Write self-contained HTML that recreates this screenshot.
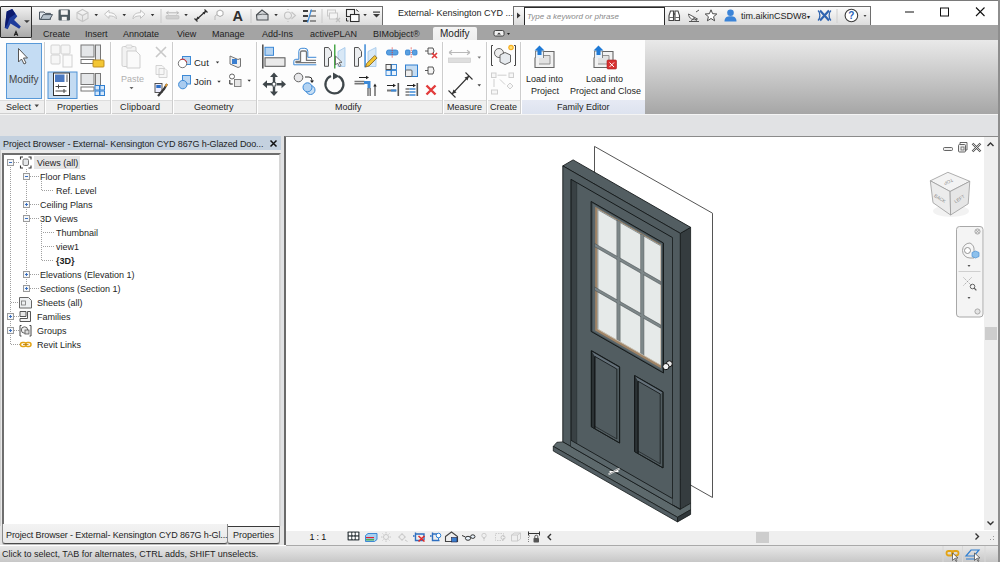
<!DOCTYPE html>
<html><head><meta charset="utf-8">
<style>
*{box-sizing:border-box;margin:0;padding:0}
html,body{width:1000px;height:562px;overflow:hidden;background:#fff;font-family:"Liberation Sans",sans-serif;font-size:9px;color:#1e1e1e}
.a{position:absolute}
.t{position:absolute;white-space:nowrap;line-height:13px;font-size:9px}
svg{position:absolute;overflow:visible}
#titlebar{left:0;top:0;width:1000px;height:24px;background:#fff;border-top:1px solid #7a7a7a}
#qat{left:31px;top:6px;width:352px;height:19px;background:linear-gradient(#fbfbfb,#dcdcdc);border:1px solid #6e6e6e;border-bottom:none;border-left:none}
#info{left:513px;top:6px;width:358px;height:19px;background:linear-gradient(#fbfbfb,#dcdcdc);border:1px solid #6e6e6e;border-bottom:none}
#search{left:524px;top:7px;width:141px;height:18px;background:#fff;border:1px solid #2a2a2a;border-bottom:none}
#rbtn{left:0;top:6px;width:32px;height:32px;background:linear-gradient(#f0f0f0,#a9a9a9);border:1px solid #2e2e2e;border-radius:1px}
#tabs{left:31px;top:25px;width:969px;height:15px;background:#a4a4a4}
#modtab{left:433px;top:27px;width:44px;height:13px;background:linear-gradient(#f4f4f4,#eeeeee);border-radius:2px 2px 0 0}
#ribbon{left:0;top:40px;width:645px;height:74px;background:#fdfdfd}
#ribgrad{left:645px;top:40px;width:355px;height:74px;background:linear-gradient(#e9e9e9,#a6a6a6)}
#lblband{left:0;top:100px;width:645px;height:14px;background:#efefef;border-top:1px solid #dddddd;border-bottom:1px solid #cfcfcf}
#febband{left:521px;top:100px;width:124px;height:14px;background:linear-gradient(#e6eaf4,#dde3ef)}
.sep{position:absolute;top:42px;width:2px;height:72px;border-left:1px solid #cdcdcd;border-right:1px solid #fff}
#strip{left:0;top:114px;width:1000px;height:22px;background:#e1e2e4;border-top:1px solid #f4f4f4}
#pbh{left:0;top:136px;width:281px;height:14px;background:#c4d1df}
#treewrap{left:0;top:150px;width:281px;height:376px;background:#ebebeb;border-left:1px solid #d0d0d0}
#tree{left:2px;top:153px;width:279px;height:373px;background:#fff;border-left:2px solid #6e6e6e;border-top:2px solid #6e6e6e;border-right:2px solid #d6d6d6}
#gap{left:281px;top:136px;width:3px;height:409px;background:#e1e2e4}
#pbtabs{left:0;top:526px;width:284px;height:19px;background:#e4e4e4}
#tab1{left:2px;top:524px;width:226px;height:19.5px;background:linear-gradient(#f3f3f3,#e8e8e8);border:1px solid #8a8a8a;border-top:none;border-bottom:1px solid #4a4a4a;border-radius:0 0 3px 3px;box-shadow:0 1px 0 #bdbdbd}
#tab2{left:227px;top:526px;width:53px;height:17.5px;background:linear-gradient(#efefef,#e6e6e6);border:1px solid #8a8a8a;border-top:1px solid #3a3a3a;border-bottom:1px solid #4a4a4a;border-radius:0 0 3px 3px;box-shadow:0 1px 0 #bdbdbd}
#canvas{left:284px;top:136px;width:716px;height:409px;background:#fff;border-left:2px solid #6a6a6a;border-top:1px solid #8a8a8a;border-right:2px solid #5a5a5a}
#vcb{left:286px;top:531px;width:712px;height:15px;background:#efefef;border-bottom:1px solid #aaaaaa}
#vscroll{left:984px;top:137px;width:14px;height:393px;background:#efefef}
#vthumb{left:985px;top:327px;width:12px;height:13px;background:#cdcdcd}
#hthumb{left:756px;top:532px;width:13px;height:11px;background:#cdcdcd}
#status{left:0;top:546px;width:1000px;height:16px;background:linear-gradient(#e8e8e8,#c7c7c7)}
</style></head><body>
<div id="titlebar" class="a"></div>
<div id="qat" class="a"></div>
<div id="info" class="a"></div>
<div id="search" class="a"></div>
<div id="tabs" class="a"></div>
<div id="rbtn" class="a"></div>
<div id="modtab" class="a"></div>
<div id="ribbon" class="a"></div>
<div id="ribgrad" class="a"></div>
<div id="lblband" class="a"></div>
<div id="febband" class="a"></div>
<div class="sep" style="left:44px"></div>
<div class="sep" style="left:110px"></div>
<div class="sep" style="left:172px"></div>
<div class="sep" style="left:256px"></div>
<div class="sep" style="left:442px"></div>
<div class="sep" style="left:486px"></div>
<div class="sep" style="left:520px"></div>
<div class="a" style="left:6px;top:43px;width:36px;height:56px;background:#c4dcf3;border:1px solid #5899d8"></div>
<div id="strip" class="a"></div>
<div id="pbh" class="a"></div>
<div id="treewrap" class="a"></div>
<div id="tree" class="a"></div>
<div class="a" style="left:34px;top:156px;width:46px;height:13px;background:#e5e5e5"></div>
<div id="gap" class="a"></div>
<div id="pbtabs" class="a"></div>
<div id="tab2" class="a"></div>
<div id="tab1" class="a"></div>
<div id="canvas" class="a"></div>
<div id="vscroll" class="a"></div>
<div id="vthumb" class="a"></div>
<div id="vcb" class="a"></div>
<div id="hthumb" class="a"></div>
<div id="status" class="a"></div>
<div class="a" style="left:998px;top:0;width:2px;height:562px;background:#8e8e8e"></div>

<!-- title texts -->
<div class="t" style="left:398px;top:7px">External- Kensington CYD ...</div>
<div class="t" style="left:527px;top:10px;color:#8a8a8a;font-style:italic;font-size:8px">Type a keyword or phrase</div>
<div class="t" style="left:741px;top:10px">tim.aikinCSDW8<span style="font-size:6px">&#9662;</span></div>

<!-- tabs -->
<div class="t" style="left:43px;top:28px">Create</div>
<div class="t" style="left:85px;top:28px">Insert</div>
<div class="t" style="left:123px;top:28px">Annotate</div>
<div class="t" style="left:177px;top:28px">View</div>
<div class="t" style="left:212px;top:28px">Manage</div>
<div class="t" style="left:262px;top:28px">Add-Ins</div>
<div class="t" style="left:310px;top:28px">activePLAN</div>
<div class="t" style="left:373px;top:28px">BIMobject&#174;</div>
<div class="t" style="left:440px;top:27px;font-size:10px">Modify</div>

<!-- panel labels -->
<div class="t" style="left:6px;top:101px">Select</div>
<div class="t" style="left:57px;top:101px">Properties</div>
<div class="t" style="left:120px;top:101px;letter-spacing:0.2px">Clipboard</div>
<div class="t" style="left:194px;top:101px">Geometry</div>
<div class="t" style="left:335px;top:101px">Modify</div>
<div class="t" style="left:447px;top:101px">Measure</div>
<div class="t" style="left:490px;top:101px">Create</div>
<div class="t" style="left:557px;top:101px">Family Editor</div>

<!-- ribbon texts -->
<div class="t" style="left:9px;top:73px;font-size:10px;color:#444">Modify</div>
<div class="t" style="left:121px;top:73px;color:#b0b0b0">Paste</div>
<div class="t" style="left:194px;top:56px;font-size:9.5px">Cut</div>
<div class="t" style="left:194px;top:75px;font-size:9.5px">Join</div>
<div class="t" style="left:526px;top:73px">Load into</div>
<div class="t" style="left:531px;top:85px">Project</div>
<div class="t" style="left:586px;top:73px">Load into</div>
<div class="t" style="left:570px;top:85px">Project and Close</div>

<!-- project browser -->
<div class="t" style="left:3px;top:138px;letter-spacing:-0.1px">Project Browser - External- Kensington CYD 867G h-Glazed Doo...</div>
<div class="t" style="left:37px;top:157px">Views (all)</div>
<div class="t" style="left:40px;top:171px">Floor Plans</div>
<div class="t" style="left:56px;top:185px">Ref. Level</div>
<div class="t" style="left:40px;top:199px">Ceiling Plans</div>
<div class="t" style="left:40px;top:213px">3D Views</div>
<div class="t" style="left:56px;top:227px">Thumbnail</div>
<div class="t" style="left:56px;top:241px">view1</div>
<div class="t" style="left:56px;top:255px;font-weight:bold">{3D}</div>
<div class="t" style="left:40px;top:269px">Elevations (Elevation 1)</div>
<div class="t" style="left:40px;top:283px">Sections (Section 1)</div>
<div class="t" style="left:37px;top:297px">Sheets (all)</div>
<div class="t" style="left:37px;top:311px">Families</div>
<div class="t" style="left:37px;top:325px">Groups</div>
<div class="t" style="left:37px;top:339px">Revit Links</div>

<div class="t" style="left:6px;top:529px;letter-spacing:-0.12px">Project Browser - External- Kensington CYD 867G h-Gl...</div>
<div class="t" style="left:233px;top:529px">Properties</div>
<div class="t" style="left:309.5px;top:531px;font-size:9px;letter-spacing:-0.2px;color:#111">1 : 1</div>
<div class="t" style="left:2px;top:548px">Click to select, TAB for alternates, CTRL adds, SHIFT unselects.</div>
<svg style="left:0;top:0" width="1000" height="562" viewBox="0 0 1000 562">
<polygon points="594.5,146.4 712.5,213.2 712.5,497.5 594.5,430.7" fill="#ffffff" stroke="#555555" stroke-width="1"/>
<polygon points="680.3,233.34 690.5999999999999,227.34 690.5999999999999,503.34 680.3,509.34" fill="#353c3f" stroke="#151a1b" stroke-width="0.8"/>
<polygon points="562.8,165.9 573.0999999999999,159.9 690.5999999999999,227.34 680.3,233.34" fill="#535e62" stroke="#151a1b" stroke-width="0.9"/>
<polygon points="562.8,165.9 680.3,233.34 680.3,509.34 562.8,441.9" fill="#505b5f" stroke="#151a1b" stroke-width="0.9"/>
<polygon points="571,179.31 576.7,182.58 576.7,449.88 571,446.61" fill="#394144"/>
<polygon points="576.7,182.58 672.5,237.57 672.5,498.57 576.7,443.58" fill="#525d61"/>
<line x1="571" y1="179.31" x2="672.5" y2="237.57" stroke="#151a1b" stroke-width="1"/>
<line x1="571" y1="179.31" x2="571" y2="446.61" stroke="#151a1b" stroke-width="1.1"/>
<line x1="672.5" y1="237.57" x2="672.5" y2="504.87" stroke="#151a1b" stroke-width="0.8"/>
<line x1="576.7" y1="182.58" x2="576.7" y2="443.58" stroke="#2a3133" stroke-width="0.8"/>
<polygon points="591.1,201.44 663.5,243.0 663.5,373.0 591.1,331.44" fill="#3d4649" stroke="#151a1b" stroke-width="1"/>
<polygon points="592.6,203.51 662.0,243.34 662.0,370.94 592.6,331.11" fill="#59656a"/>
<polygon points="595.2,206.8 661.0,244.57 661.0,368.17 595.2,330.4" fill="#a08466"/>
<polygon points="597.6,209.28 660.6,245.44 660.6,364.94 597.6,328.78" fill="#e6eae9"/>
<line x1="597.9" y1="209.45" x2="597.9" y2="328.95" stroke="#8a9496" stroke-width="1"/>
<line x1="597.6" y1="209.58" x2="660.6" y2="245.74" stroke="#8a9496" stroke-width="1"/>
<polygon points="616.9,220.35 620.1,222.19 620.1,341.69 616.9,339.85" fill="#7d8789" stroke="#3e4547" stroke-width="0.5"/>
<polygon points="640.7,234.01 643.9,235.85 643.9,355.35 640.7,353.51" fill="#7d8789" stroke="#3e4547" stroke-width="0.5"/>
<polygon points="594.6,243.45 660.6,281.34 660.6,284.54 594.6,246.65" fill="#7d8789" stroke="#3e4547" stroke-width="0.5"/>
<polygon points="594.6,286.95 660.6,324.84 660.6,328.04 594.6,290.15" fill="#7d8789" stroke="#3e4547" stroke-width="0.5"/>
<polygon points="617.4,220.64 619.6,221.9 619.6,341.4 617.4,340.14" fill="#7d8789"/>
<polygon points="641.2,234.3 643.4,235.56 643.4,355.06 641.2,353.8" fill="#7d8789"/>
<polygon points="597.6,328.48 660.6,364.64 660.6,365.54 597.6,329.38" fill="#c9c3b5"/>
<polygon points="591.4,350.82 619.6,367.0 619.6,443.0 591.4,426.82" fill="#505b5f" stroke="#151a1b" stroke-width="1"/>
<polygon points="591.4,350.82 594.9,353.63 594.9,428.83 591.4,426.82" fill="#2b3234"/>
<polygon points="591.4,350.82 619.6,367.0 616.8,369.0 594.9,356.43" fill="#65717a"/>
<line x1="591.4" y1="350.82" x2="619.6" y2="367.0" stroke="#151a1b" stroke-width="1.1"/>
<line x1="594.9" y1="356.43" x2="616.8" y2="369.0" stroke="#151a1b" stroke-width="0.9"/>
<line x1="594.9" y1="356.43" x2="594.9" y2="428.83" stroke="#0c0f10" stroke-width="1.1"/>
<line x1="591.4" y1="350.82" x2="591.4" y2="426.82" stroke="#151a1b" stroke-width="1.1"/>
<line x1="616.8" y1="369.0" x2="616.8" y2="438.9" stroke="#151a1b" stroke-width="0.8"/>
<line x1="619.6" y1="367.0" x2="619.6" y2="443.0" stroke="#151a1b" stroke-width="0.8"/>
<line x1="591.4" y1="426.82" x2="619.6" y2="443.0" stroke="#151a1b" stroke-width="0.8"/>
<line x1="594.9" y1="426.33" x2="616.8" y2="438.9" stroke="#151a1b" stroke-width="0.6"/>
<polygon points="634.6,375.61 663.0,391.91 663.0,467.91 634.6,451.61" fill="#505b5f" stroke="#151a1b" stroke-width="1"/>
<polygon points="634.6,375.61 638.1,378.42 638.1,453.62 634.6,451.61" fill="#2b3234"/>
<polygon points="634.6,375.61 663.0,391.91 660.2,393.91 638.1,381.22" fill="#65717a"/>
<line x1="634.6" y1="375.61" x2="663.0" y2="391.91" stroke="#151a1b" stroke-width="1.1"/>
<line x1="638.1" y1="381.22" x2="660.2" y2="393.91" stroke="#151a1b" stroke-width="0.9"/>
<line x1="638.1" y1="381.22" x2="638.1" y2="453.62" stroke="#0c0f10" stroke-width="1.1"/>
<line x1="634.6" y1="375.61" x2="634.6" y2="451.61" stroke="#151a1b" stroke-width="1.1"/>
<line x1="660.2" y1="393.91" x2="660.2" y2="463.81" stroke="#151a1b" stroke-width="0.8"/>
<line x1="663.0" y1="391.91" x2="663.0" y2="467.91" stroke="#151a1b" stroke-width="0.8"/>
<line x1="634.6" y1="451.61" x2="663.0" y2="467.91" stroke="#151a1b" stroke-width="0.8"/>
<line x1="638.1" y1="451.12" x2="660.2" y2="463.81" stroke="#151a1b" stroke-width="0.6"/>
<polygon points="553.3,446.4 677.5,517.3181999999999 690.6,509.8 690.6,503.3 680.3,509.34 562.8,441.9 556.9,442.3" fill="#5d696c" stroke="#151a1b" stroke-width="0.8"/>
<polygon points="553.3,446.4 677.5,517.3181999999999 677.5,521.9182 553.3,451.0" fill="#535e63" stroke="#151a1b" stroke-width="0.8"/>
<polygon points="677.5,517.3181999999999 690.6,509.8 690.6,514.4 677.5,521.9182" fill="#30373a" stroke="#151a1b" stroke-width="0.8"/>
<polygon points="571,440.31 672.5,498.57 672.5,504.97 571,446.71" fill="#5a666a"/>
<line x1="571" y1="440.31" x2="672.5" y2="498.57" stroke="#151a1b" stroke-width="0.9"/>
<line x1="571" y1="446.71" x2="680.3" y2="509.44" stroke="#151a1b" stroke-width="0.9"/>
<circle cx="669.3" cy="363.8" r="3.0" fill="#e8e8e8" stroke="#111" stroke-width="1"/>
<circle cx="665.9" cy="366.6" r="3.1" fill="#f4f4f4" stroke="#111" stroke-width="1"/>
<path d="M608.5,474.5 L619.5,468.5 M609.5,471.8 L618.5,471.3" stroke="#fff" stroke-width="1.6"/>
<path d="M608.5,474.5 L619.5,468.5" stroke="#222" stroke-width="0.5"/>

<!-- R button -->
<polygon points="6.7,11.4 12.2,9.1 17.3,16.2 14.1,20 20.8,26.4 19.2,28.7 10.5,23.5 7.7,29.3 4.8,28" fill="#1f3c9c"/>
<polygon points="6.7,11.4 12.2,9.1 15.5,14 9.5,18 7.5,24 4.8,28" fill="#0c1a6e"/>
<polygon points="24,20.3 29.8,20.3 26.9,23" fill="#3a3a3a"/>
<path d="M14.2,35.8 L16,31.5 L17.8,35.8 M15,34.4 h2" stroke="#222" stroke-width="1.1" fill="none"/>
<!-- QAT -->
<path d="M39.5,12 h4.5 l1.2,1.4 h5.3 v6 h-11z" fill="#dfe4ea" stroke="#4a5560" stroke-width="1"/>
<path d="M40.5,19.4 l2.8,-4.8 h9.2 l-2.8,4.8z" fill="#b7c2cc" stroke="#4a5560" stroke-width="1"/>
<rect x="58.5" y="9.5" width="11.5" height="11" rx="1.2" fill="#4d5960"/>
<rect x="60.8" y="10.2" width="7" height="4.6" fill="#f2f2f2"/>
<rect x="61.8" y="16.8" width="5" height="3.7" fill="#f2f2f2"/>
<path d="M82.5,9.5 l5.5,3 v6 l-5.5,3 l-5.5,-3 v-6z M77,12.5 l5.5,3 l5.5,-3 M82.5,15.5 v6" fill="none" stroke="#c6c6c6" stroke-width="1.1"/>
<g fill="#333"><polygon points="94.5,14 98,14 96.25,16.2"/><polygon points="122.5,14 126,14 124.25,16.2"/><polygon points="150.8,14 154.3,14 152.55,16.2"/><polygon points="184.3,14 187.8,14 186.05,16.2"/><polygon points="274.3,14 277.8,14 276.05,16.2"/><polygon points="363.3,14 366.8,14 365.05,16.2"/></g>
<path d="M104.5,14.2 l4.5,-4 v2.5 c4,0 7.5,1.5 7.5,6.2 c-1.5,-2.5 -4,-3 -7.5,-3 v2.5z" fill="#fafafa" stroke="#c3c3c3" stroke-width="1"/>
<path d="M145,14.2 l-4.5,-4 v2.5 c-4,0 -7.5,1.5 -7.5,6.2 c1.5,-2.5 4,-3 7.5,-3 v2.5z" fill="#fafafa" stroke="#c3c3c3" stroke-width="1"/>
<rect x="160.5" y="9" width="1" height="14" fill="#c9c9c9"/>
<rect x="250.5" y="9" width="1" height="14" fill="#c9c9c9"/>
<rect x="321.5" y="9" width="1" height="14" fill="#c9c9c9"/>
<path d="M166.5,12.8 h12 M166.5,12.8 l2,-1.5 M166.5,12.8 l2,1.5 M178.5,12.8 l-2,-1.5 M178.5,12.8 l-2,1.5" stroke="#b8b8b8" stroke-width="1" fill="none"/>
<rect x="166" y="15.5" width="13" height="3.5" rx="1" fill="#d0d0d0" stroke="#b8b8b8" stroke-width="0.6"/>
<path d="M196,20 L206,11 M194.5,18.5 l3,3 M204.5,9.5 l3,3" stroke="#2e2e2e" stroke-width="1.2" fill="none"/>
<polygon points="196,20 199.5,18.6 197.4,16.5" fill="#2e2e2e"/><polygon points="206,11 202.5,12.4 204.6,14.5" fill="#2e2e2e"/>
<path d="M215,20 v-4 l3,-2" stroke="#bbb" stroke-width="1" fill="none"/>
<path d="M220,10 l3,1.5 v3.5 l-3,1.5 l-3,-1.5 v-3.5z" fill="#fff" stroke="#aaa" stroke-width="1"/>
<text x="232.5" y="21" font-family="Liberation Sans" font-weight="bold" font-size="14.5" fill="#2f2f2f">A</text>
<path d="M256.5,15 l5.5,-5 l6,4.5 v5.5 h-11z" fill="#d6d9dc" stroke="#4a4f53" stroke-width="1.1"/>
<path d="M256.5,15 l6,-0.8 l5.5,0.3" stroke="#4a4f53" stroke-width="0.8" fill="none"/>
<path d="M284.5,15.5 a3.5,3.5 0 1 0 7,0 a3.5,3.5 0 1 0 -7,0 M291.5,12 l4,3.5 l-4,3.5 M288,10 v-1 M288,22 v-1" stroke="#c3c3c3" stroke-width="1.1" fill="none"/>
<g fill="#3f3f3f"><rect x="303" y="10" width="5" height="2"/><rect x="303" y="15" width="5" height="2"/><rect x="303" y="20" width="5" height="2"/><rect x="310" y="10.5" width="6" height="1"/><rect x="310" y="15.5" width="6" height="1"/><rect x="310" y="20.5" width="6" height="1"/></g>
<path d="M307.5,22.5 l4,-13" stroke="#3d8ee0" stroke-width="1.2"/>
<rect x="327.5" y="10" width="8" height="6" fill="none" stroke="#c9c9c9"/><rect x="329.5" y="13" width="8" height="6" fill="#f4f4f4" stroke="#c9c9c9"/>
<path d="M336,18 l4,4 M340,18 l-4,4" stroke="#c0c0c0" stroke-width="1.2"/>
<rect x="346.5" y="9.5" width="8" height="7" fill="#f4f4f4" stroke="#2e2e2e" stroke-width="1.1"/><rect x="350.5" y="14.5" width="8.5" height="7" fill="#fff" stroke="#2e2e2e" stroke-width="1.1"/>
<path d="M356,9.5 l2.5,2 M346.5,18 v3 h2" stroke="#2e2e2e" fill="none"/>
<rect x="373" y="11.5" width="7" height="1.2" fill="#3a3a3a"/><polygon points="373,14 380,14 376.5,17.5" fill="#3a3a3a"/>
<!-- infocenter -->
<path d="M669,20.5 v-5 l1.5,-4.5 h3 v9.5z M675,20.5 v-9.5 h3 l1.5,4.5 v5z" fill="#fff" stroke="#444" stroke-width="1.1"/><path d="M673.5,14 h1.5" stroke="#444" stroke-width="1.5"/><path d="M669.5,17.5 h3.5 M675.5,17.5 h3.5" stroke="#444" stroke-width="0.8"/>
<path d="M689,21.5 h10 M691,21.5 l3,-4 l3,4 M688.5,14 a6,6 0 0 0 9,5 z M696,12 l3,-2" stroke="#555" stroke-width="1" fill="#fff"/>
<polygon points="711,9.8 712.6,13.7 716.8,14 713.6,16.7 714.6,20.8 711,18.5 707.4,20.8 708.4,16.7 705.2,14 709.4,13.7" fill="#fff" stroke="#4a4a4a" stroke-width="1"/>
<circle cx="730.5" cy="12.8" r="3.3" fill="#3b84d8"/><path d="M724.5,21.5 c0,-4 2.5,-5.2 6,-5.2 s6,1.2 6,5.2z" fill="#3b84d8"/>
<path d="M820,10.5 l9,10 M829,10.5 l-9,10" stroke="#2f64b0" stroke-width="2.2" fill="none"/><path d="M818,10.5 c2.5,2 2.5,8 0,10 M831,10.5 c-2.5,2 -2.5,8 0,10" stroke="#2f64b0" stroke-width="1.3" fill="none"/>
<rect x="836.5" y="9" width="1" height="14" fill="#cfcfcf"/>
<circle cx="851.4" cy="15.5" r="6.3" fill="#fff" stroke="#3a3a3a" stroke-width="1.1"/>
<text x="848.3" y="19.3" font-family="Liberation Sans" font-weight="bold" font-size="10" fill="#2a62b8">?</text>
<polygon points="863.5,15 866.5,15 865,17" fill="#444"/>
<!-- window controls -->
<rect x="905" y="11.5" width="9" height="1" fill="#111"/>
<rect x="940.5" y="8" width="8" height="8" fill="none" stroke="#111" stroke-width="1"/>
<path d="M976,7.5 l8.5,8.5 M984.5,7.5 l-8.5,8.5" stroke="#111" stroke-width="1.1"/>
<!-- tab bar icon -->
<rect x="494" y="30.5" width="10" height="5.5" rx="1.5" fill="#f0f0f0" stroke="#333" stroke-width="0.9"/>
<polygon points="497,34.5 501,34.5 499,32.5" fill="#333"/>
<polygon points="507,33 510,33 508.5,35" fill="#222"/>
<polygon points="517,12.5 520.5,15.5 517,18.5" fill="#333"/>
<!-- Select panel -->
<path d="M18.5,48.5 v13.5 l3,-3 l2.5,5 l2,-1 l-2.5,-5 h4z" fill="#fff" stroke="#555" stroke-width="1"/>
<polygon points="34.5,104.5 39,104.5 36.75,107.3" fill="#444"/>
<!-- Properties panel -->
<g stroke="#d2d2d2" fill="#f6f6f6" stroke-width="1"><rect x="51" y="45" width="9" height="9" rx="1"/><rect x="61" y="45" width="9" height="9" rx="1"/><rect x="51" y="55" width="9" height="9" rx="1"/><rect x="63" y="55" width="9" height="12" fill="#fbfbfb"/></g>
<g stroke="#777" fill="#e4e6e8" stroke-width="1"><rect x="81" y="45" width="13" height="12"/><rect x="95.5" y="45" width="5" height="17"/><rect x="81" y="59.5" width="13" height="4" fill="#fff"/></g>
<rect x="93" y="60" width="11" height="7" rx="0.8" fill="#f3c633" stroke="#b8861a" stroke-width="0.9"/>
<rect x="48" y="72" width="29" height="26.5" fill="#c3dbf2" stroke="#4d92d6" stroke-width="1"/>
<rect x="53.5" y="73" width="16" height="22.5" fill="#fff" stroke="#333" stroke-width="1"/>
<rect x="55" y="74.5" width="9.5" height="7.5" fill="#4a78c0"/>
<rect x="66" y="74.5" width="2" height="7.5" fill="#aaa"/>
<path d="M55.5,86.5 h11 M55.5,91 h11 M58.5,84.5 v4 M64,89 v4" stroke="#444" stroke-width="1"/>
<g stroke="#777" fill="#e4e6e8" stroke-width="1"><rect x="81" y="73.5" width="13" height="11"/><rect x="95.5" y="73.5" width="5" height="14"/><rect x="81" y="87" width="13" height="4" fill="#fff"/></g>
<g fill="#d6e8fa" stroke="#2f7fd1" stroke-width="1"><rect x="95" y="85.5" width="4.5" height="4.5"/><rect x="100" y="85.5" width="4.5" height="4.5"/><rect x="95" y="91" width="4.5" height="4.5"/><rect x="100" y="91" width="4.5" height="4.5"/></g>
<!-- Clipboard -->
<rect x="122" y="46.5" width="14" height="20" rx="1.5" fill="#f2f2f2" stroke="#cfcfcf" stroke-width="1"/>
<rect x="126" y="45" width="6" height="3" rx="1" fill="#f2f2f2" stroke="#cfcfcf" stroke-width="0.8"/>
<path d="M127,51 h9 l4,4 v13 h-13z" fill="#fafafa" stroke="#cfcfcf" stroke-width="1"/>
<polygon points="129.5,87 133.5,87 131.5,89.3" fill="#666"/>
<path d="M156,47 l10,10 M166,47 l-10,10" stroke="#c9c9c9" stroke-width="1.6"/>
<path d="M156,65.5 h6 l2,2 v7 h-8z M159,68.5 h6 l2,2 v7 h-8z" fill="#f7f7f7" stroke="#cfcfcf" stroke-width="0.9"/>
<rect x="155" y="83.5" width="7" height="9" fill="#eef" stroke="#444" stroke-width="0.9"/><rect x="156.3" y="85" width="4.5" height="3" fill="#2d6fc7"/>
<path d="M158,96 l6,-7 l3,-5" stroke="#3a3a3a" stroke-width="2.2" fill="none"/><path d="M165.5,86.5 l1.5,-2.5" stroke="#e59b2e" stroke-width="1.6"/>
<!-- Geometry -->
<rect x="182.5" y="56.5" width="8" height="8" fill="#bcd7f2" stroke="#3c89d6" stroke-width="1"/>
<circle cx="182.5" cy="63.5" r="4.2" fill="#fff" stroke="#666" stroke-width="0.9"/>
<path d="M180.5,59.6 a4.2,4.2 0 0 1 6.1,2.6" stroke="#e02a2a" stroke-width="1" fill="none"/>
<polygon points="215.8,61.5 219.2,61.5 217.5,63.5" fill="#333"/>
<rect x="182.5" y="75.5" width="8" height="8.5" fill="#bcd7f2" stroke="#3c89d6" stroke-width="1"/>
<circle cx="182.8" cy="84.6" r="4.2" fill="#a9cbef" stroke="#3c89d6" stroke-width="1"/>
<polygon points="217.3,80.8 220.7,80.8 219,82.8" fill="#333"/>
<path d="M230,56 l8,3.5 l2.5,-1 v8 l-2.5,1 l-8,-3.5z" fill="#f0f0f0" stroke="#666" stroke-width="0.9"/>
<rect x="232" y="59" width="5" height="5" fill="#3a7fd0"/>
<circle cx="232" cy="76.5" r="2.5" fill="#fff" stroke="#555" stroke-width="0.9"/>
<rect x="234.5" y="79.5" width="6.5" height="7" fill="#e6e6e6" stroke="#777" stroke-width="0.9"/>
<path d="M229.8,80 v4 h3" stroke="#222" stroke-width="1" fill="none"/>
<polygon points="247.5,79.8 250.9,79.8 249.2,81.8" fill="#333"/>
<!-- Modify panel -->
<rect x="262" y="44.5" width="1.6" height="24" fill="#555"/>
<rect x="265" y="47.3" width="8.5" height="8" fill="#b6d4f1" stroke="#3c89d6" stroke-width="1"/>
<rect x="265" y="57.8" width="20" height="8.5" fill="#eaeaea" stroke="#555" stroke-width="1"/>
<path d="M293.8,64.8 v-3.5 a2,2 0 0 1 2,-2 h3 v-8 a3,3 0 0 1 3,-3 h3 a3,3 0 0 1 3,3 v6 h8.5 M293.8,64.8 h22.5" stroke="#3c89d6" stroke-width="1" fill="none"/>
<path d="M296,63 v-1.5 h4.5 v-9 a1.5,1.5 0 0 1 1.5,-1.5 h3 a1.5,1.5 0 0 1 1.5,1.5 v7.8 h9.5 M296,62.7 h20" stroke="#777" stroke-width="1.3" fill="none"/>
<path d="M324.5,47.5 h4 l3,4 v5 l-3,1.5 v8.3 h-4z" fill="#eceef0" stroke="#555" stroke-width="1"/>
<rect x="334" y="44.5" width="1.5" height="24" fill="#4aa84a"/>
<path d="M345,47.5 v19 h-7 v-15z" fill="#d8e8f6" stroke="#9ec5ea" stroke-width="0.8"/>
<path d="M335.5,56 v9 l2,-2 l2,3.5 l1.5,-0.8 l-2,-3.3 h3z" fill="#fff" stroke="#555" stroke-width="0.8"/>
<path d="M354.5,47.5 h4 l3,4 v5 l-3,1.5 v8.3 h-4z" fill="#eceef0" stroke="#555" stroke-width="1"/>
<rect x="364.3" y="44.3" width="1.5" height="23" fill="#3c89d6"/>
<path d="M376,47.5 v19 h-8 v-15z" fill="#d8e8f6" stroke="#9ec5ea" stroke-width="0.8"/>
<path d="M365.5,67 l1.2,-3.5 l8,-8 l2.4,2.4 l-8,8z" fill="#f3c633" stroke="#7a5a20" stroke-width="0.8"/>
<g fill="#3f474b"><polygon points="274,72.5 278,77 275.2,77 275.2,82 272.8,82 272.8,77 270,77"/><polygon points="274,96 278,91.5 275.2,91.5 275.2,86.5 272.8,86.5 272.8,91.5 270,91.5"/><polygon points="262.5,84.3 267,80.3 267,83.1 272,83.1 272,85.5 267,85.5 267,88.3"/><polygon points="286,84.3 281.5,80.3 281.5,83.1 276.5,83.1 276.5,85.5 281.5,85.5 281.5,88.3"/></g>
<rect x="272.3" y="82.6" width="3.4" height="3.4" fill="#fff" stroke="#3f474b" stroke-width="0.8"/>
<circle cx="298.5" cy="77.5" r="4.3" fill="#e8e8ea" stroke="#555" stroke-width="0.9"/>
<path d="M305,77 h4 a3,3 0 0 1 3,3 v1" stroke="#333" stroke-width="1" fill="none"/><polygon points="310,80.5 314,80.5 312,83" fill="#222"/>
<circle cx="310.5" cy="90" r="4.5" fill="#c7dff5" stroke="#3c89d6" stroke-width="1"/>
<circle cx="307.5" cy="87.3" r="4.5" fill="#b3d3f2" stroke="#3c89d6" stroke-width="1"/>
<path d="M331,76 a9,9 0 1 0 7.5,0.3" stroke="#3f474b" stroke-width="2.2" fill="none"/>
<polygon points="333,72.5 339.5,76.3 333,79.5" fill="#3f474b"/>
<path d="M354.5,81.5 h10 M354.5,83.8 h10" stroke="#777" stroke-width="1.5"/>
<path d="M364,82.6 h5 v6" stroke="#3c89d6" stroke-width="3" fill="none"/>
<path d="M368,88 v8 M370.2,88 v8" stroke="#777" stroke-width="1.5"/>
<path d="M359,77.5 h7" stroke="#222" stroke-width="1"/><polygon points="366,75.8 369,77.5 366,79.2" fill="#222"/>
<path d="M375,96 v-10" stroke="#222" stroke-width="1"/><polygon points="373.3,86.5 375,83.5 376.7,86.5" fill="#222"/>
<rect x="386.5" y="50" width="11.5" height="5" rx="2" fill="#5aa0e0" stroke="#2f7fd1" stroke-width="0.8"/>
<path d="M392.2,47.5 v10" stroke="#e03a3a" stroke-width="0.9" stroke-dasharray="1.2,1"/>
<rect x="405.5" y="50" width="4.5" height="5" rx="1.2" fill="#5aa0e0" stroke="#2f7fd1" stroke-width="0.8"/>
<rect x="412.5" y="50" width="4.5" height="5" rx="1.2" fill="#5aa0e0" stroke="#2f7fd1" stroke-width="0.8"/>
<path d="M411.2,47.5 v10" stroke="#e03a3a" stroke-width="0.9" stroke-dasharray="1.2,1"/>
<path d="M425,51 h3 M428,48 h5 l1,3 l-1,3 h-5z" stroke="#444" stroke-width="0.9" fill="#f4f4f4"/>
<path d="M432,53 l5,5 M437,53 l-5,5" stroke="#e03a3a" stroke-width="1.6"/>
<g fill="#e9f2fb" stroke="#2f7fd1" stroke-width="0.9"><rect x="391.5" y="64.5" width="5" height="5"/><rect x="386" y="70.5" width="5" height="5"/><rect x="391.5" y="70.5" width="5" height="5"/></g>
<rect x="386" y="64.5" width="5" height="5" fill="#f2f2f2" stroke="#444" stroke-width="0.9"/>
<rect x="405.5" y="65" width="12" height="11.5" fill="#c5ddf3" stroke="#2f7fd1" stroke-width="1"/>
<rect x="405.5" y="70" width="6.5" height="6.5" rx="1" fill="#eee" stroke="#555" stroke-width="0.9"/>
<path d="M425,70.5 h3 M428,67 h5 l1,3.5 l-1,3.5 h-5z" stroke="#444" stroke-width="0.9" fill="#f4f4f4"/>
<path d="M387,85.5 h7" stroke="#222" stroke-width="1"/><polygon points="393,83.8 396,85.5 393,87.2" fill="#222"/>
<path d="M387,90.5 h4 M391,90.5 h5" stroke="#777" stroke-width="2"/><path d="M391,90.5 h5.5" stroke="#3c89d6" stroke-width="2"/>
<rect x="397.5" y="83" width="1.6" height="13" fill="#555"/>
<path d="M407,85.5 h7" stroke="#222" stroke-width="1"/><polygon points="413,83.8 416,85.5 413,87.2" fill="#222"/>
<path d="M405.5,89 h4 M405.5,92 h4 M405.5,95 h4" stroke="#777" stroke-width="1.6"/><path d="M409.5,89 h6 M409.5,92 h6 M409.5,95 h6" stroke="#3c89d6" stroke-width="1.6"/>
<rect x="416.5" y="83" width="1.6" height="13" fill="#555"/>
<path d="M426.5,85.5 l9,9 M435.5,85.5 l-9,9" stroke="#e23b3b" stroke-width="2.4"/>
<!-- Measure -->
<path d="M449,52.5 h21 M449,52.5 l3,-2.2 M449,52.5 l3,2.2 M470,52.5 l-3,-2.2 M470,52.5 l-3,2.2" stroke="#b9b9b9" stroke-width="1.1" fill="none"/>
<rect x="448.5" y="58" width="22" height="4.5" fill="#dedede" stroke="#c8c8c8" stroke-width="0.6"/>
<polygon points="477.5,56.5 481,56.5 479.25,58.7" fill="#777"/>
<path d="M452,94 L469,76 M448.5,90.5 l7,7 M465.5,72.5 l7,7" stroke="#333" stroke-width="1.1" fill="none"/>
<polygon points="452,94 456.5,92.5 453.5,89.5" fill="#333"/><polygon points="469,76 464.5,77.5 467.5,80.5" fill="#333"/>
<polygon points="477.5,84.3 481,84.3 479.25,86.5" fill="#444"/>
<!-- Create -->
<path d="M493,45.5 h-1.5 v20 h1.5 M514,45.5 h1.5 v20 h-1.5" stroke="#444" stroke-width="1" fill="none"/>
<circle cx="499" cy="53" r="4.5" fill="#eee" stroke="#555" stroke-width="0.9"/>
<path d="M500,55 l5,-2.5 l5.5,2.5 v7 l-5.5,2.5 l-5,-2.5z" fill="#e6eaee" stroke="#555" stroke-width="0.9"/>
<circle cx="511" cy="47.5" r="2.8" fill="#f7b024"/><circle cx="511" cy="47.5" r="1.5" fill="#ffe27a"/>
<g stroke="#cfcfcf" stroke-width="1" fill="#f7f7f7"><rect x="491.5" y="73" width="4.5" height="4.5"/><rect x="509" y="73" width="4.5" height="4.5"/><rect x="491.5" y="90" width="6" height="4"/><path d="M510,83 l3,3 l-3,3 l-3,-3z"/><path d="M497.5,75.2 h9 M494,79 v8 M500,79.5 l5,5"/></g>
<!-- Family editor -->
<path d="M539,51.5 h15 v16 h-19 v-10" fill="#f2f2f2" stroke="#666" stroke-width="1.1"/>
<path d="M539,55.5 h11 v8.5 h-11" fill="#e2e2e2" stroke="#888" stroke-width="0.9"/>
<path d="M535.5,58 v-7 h8 v7" fill="#e8f0f8" stroke="#777" stroke-width="0.9"/>
<polygon points="539.5,45.5 544.5,50.5 541.5,50.5 541.5,55 537.5,55 537.5,50.5 534.5,50.5" fill="#1f7ad6"/>
<path d="M598,51.5 h15 v16 h-19 v-10" fill="#f2f2f2" stroke="#666" stroke-width="1.1"/>
<path d="M598,55.5 h11 v8.5 h-11" fill="#e2e2e2" stroke="#888" stroke-width="0.9"/>
<path d="M594.5,58 v-7 h8 v7" fill="#e8f0f8" stroke="#777" stroke-width="0.9"/>
<polygon points="598.5,45.5 603.5,50.5 600.5,50.5 600.5,55 596.5,55 596.5,50.5 593.5,50.5" fill="#1f7ad6"/>
<rect x="607" y="60" width="9.5" height="9" rx="1" fill="#d93030" stroke="#a31c1c" stroke-width="0.6"/>
<path d="M609.5,62.5 l4.5,4.5 M614,62.5 l-4.5,4.5" stroke="#fff" stroke-width="1"/>
<path d="M10.5,167 V345.0" fill="none" stroke="#a0a0a0" stroke-width="1" stroke-dasharray="1,1"/>
<path d="M26.5,169 V288.5" fill="none" stroke="#a0a0a0" stroke-width="1" stroke-dasharray="1,1"/>
<path d="M41.5,181 V190.5 H54" fill="none" stroke="#a0a0a0" stroke-width="1" stroke-dasharray="1,1"/>
<path d="M41.5,223 V260.5 H54 M43,232.5 H54 M43,246.5 H54" fill="none" stroke="#a0a0a0" stroke-width="1" stroke-dasharray="1,1"/>
<path d="M30,176.5 H39" fill="none" stroke="#a0a0a0" stroke-width="1" stroke-dasharray="1,1"/>
<rect x="23.5" y="173.5" width="6" height="6" fill="#f4f6f8" stroke="#9b9b9b" stroke-width="1"/><path d="M25,176.5 h3" stroke="#3a6fc0" stroke-width="1"/>
<path d="M30,204.5 H39" fill="none" stroke="#a0a0a0" stroke-width="1" stroke-dasharray="1,1"/>
<rect x="23.5" y="201.5" width="6" height="6" fill="#f4f6f8" stroke="#9b9b9b" stroke-width="1"/><path d="M25,204.5 h3" stroke="#3a6fc0" stroke-width="1"/><path d="M26.5,203.0 v3" stroke="#3a6fc0" stroke-width="1"/>
<path d="M30,218.5 H39" fill="none" stroke="#a0a0a0" stroke-width="1" stroke-dasharray="1,1"/>
<rect x="23.5" y="215.5" width="6" height="6" fill="#f4f6f8" stroke="#9b9b9b" stroke-width="1"/><path d="M25,218.5 h3" stroke="#3a6fc0" stroke-width="1"/>
<path d="M30,274.5 H39" fill="none" stroke="#a0a0a0" stroke-width="1" stroke-dasharray="1,1"/>
<rect x="23.5" y="271.5" width="6" height="6" fill="#f4f6f8" stroke="#9b9b9b" stroke-width="1"/><path d="M25,274.5 h3" stroke="#3a6fc0" stroke-width="1"/><path d="M26.5,273.0 v3" stroke="#3a6fc0" stroke-width="1"/>
<path d="M30,288.5 H39" fill="none" stroke="#a0a0a0" stroke-width="1" stroke-dasharray="1,1"/>
<rect x="23.5" y="285.5" width="6" height="6" fill="#f4f6f8" stroke="#9b9b9b" stroke-width="1"/><path d="M25,288.5 h3" stroke="#3a6fc0" stroke-width="1"/><path d="M26.5,287.0 v3" stroke="#3a6fc0" stroke-width="1"/>
<path d="M14,162.5 H20" fill="none" stroke="#a0a0a0" stroke-width="1" stroke-dasharray="1,1"/>
<path d="M11,302.5 H20" fill="none" stroke="#a0a0a0" stroke-width="1" stroke-dasharray="1,1"/>
<path d="M14,316.5 H20" fill="none" stroke="#a0a0a0" stroke-width="1" stroke-dasharray="1,1"/>
<path d="M14,330.5 H20" fill="none" stroke="#a0a0a0" stroke-width="1" stroke-dasharray="1,1"/>
<path d="M11,344.5 H20" fill="none" stroke="#a0a0a0" stroke-width="1" stroke-dasharray="1,1"/>
<rect x="7.5" y="159.5" width="6" height="6" fill="#f4f6f8" stroke="#9b9b9b" stroke-width="1"/><path d="M9,162.5 h3" stroke="#3a6fc0" stroke-width="1"/>
<rect x="7.5" y="313.5" width="6" height="6" fill="#f4f6f8" stroke="#9b9b9b" stroke-width="1"/><path d="M9,316.5 h3" stroke="#3a6fc0" stroke-width="1"/><path d="M10.5,315.0 v3" stroke="#3a6fc0" stroke-width="1"/>
<rect x="7.5" y="327.5" width="6" height="6" fill="#f4f6f8" stroke="#9b9b9b" stroke-width="1"/><path d="M9,330.5 h3" stroke="#3a6fc0" stroke-width="1"/><path d="M10.5,329.0 v3" stroke="#3a6fc0" stroke-width="1"/>
<path d="M20.5,159.5 v-2.5 h2.5 M28.5,157.0 h2.5 v2.5 M31,165.5 v2.5 h-2.5 M23,168.0 h-2.5 v-2.5" stroke="#333" stroke-width="1.1" fill="none"/>
<rect x="23" y="159.0" width="5.5" height="6.5" rx="1.5" fill="#e6e8ea" stroke="#666" stroke-width="0.9"/>
<path d="M19.5,297.5 h9 l3,3 v7.5 h-12z" fill="#eef0f2" stroke="#666" stroke-width="1"/><rect x="21.5" y="301.0" width="4" height="4" fill="none" stroke="#777" stroke-width="0.8"/>
<path d="M20,311.5 h6 v5 h-6z" fill="#e8e8e8" stroke="#555" stroke-width="1"/><path d="M27.5,311.5 h3 v10 h-10.5 v-3 h7.5z" fill="#f4f4f4" stroke="#555" stroke-width="1"/>
<path d="M21.5,325.5 h-1.5 v10.5 h1.5 M29.5,325.5 h1.5 v10.5 h-1.5" stroke="#444" stroke-width="1" fill="none"/><circle cx="24.5" cy="330.0" r="3.2" fill="#eee" stroke="#555" stroke-width="0.9"/><rect x="25" y="330.0" width="4" height="4" fill="#ddd" stroke="#555" stroke-width="0.8"/>
<rect x="20.5" y="342.5" width="5.5" height="4" rx="2" fill="none" stroke="#e3a415" stroke-width="1.5"/><rect x="25.5" y="342.5" width="5.5" height="4" rx="2" fill="none" stroke="#e3a415" stroke-width="1.5"/><path d="M23,344.5 h5.5" stroke="#b07a10" stroke-width="0.8"/>
<!-- PB close -->
<path d="M270.5,140.5 l6,6 M276.5,140.5 l-6,6" stroke="#111" stroke-width="1.5"/>
<!-- canvas window ctrls -->
<rect x="943.5" y="147.5" width="9" height="3" rx="1" fill="#eee" stroke="#555" stroke-width="0.9"/>
<rect x="958.5" y="144.5" width="7" height="7.5" rx="1" fill="#eee" stroke="#555" stroke-width="0.9"/>
<path d="M960,144 v-1.5 h7 v7.5 h-1" fill="none" stroke="#555" stroke-width="0.9"/>
<rect x="961" y="147" width="3" height="3" fill="none" stroke="#555" stroke-width="0.7"/>
<path d="M972.5,143.5 l8,8 M980.5,143.5 l-8,8" stroke="#555" stroke-width="2.3"/>
<path d="M972.5,143.5 l8,8 M980.5,143.5 l-8,8" stroke="#eee" stroke-width="0.8"/>
<path d="M987.5,146 l3,-3 l3,3" stroke="#333" stroke-width="1.4" fill="none"/>
<path d="M987.5,521.5 l3,3 l3,-3" stroke="#333" stroke-width="1.4" fill="none"/>
<path d="M975.5,533.5 l3,3 l-3,3" stroke="#333" stroke-width="1.4" fill="none"/>
<path d="M990,539.5 h1 M993,539.5 h1 M993,536.5 h1" stroke="#999" stroke-width="1"/>
<!-- view cube -->
<ellipse cx="951" cy="211" rx="18" ry="6" fill="#000" opacity="0.05"/>
<polygon points="947.9,172.3 969.8,181.3 950.1,191.5 930.3,180.8" fill="#f3f3f3" stroke="#9a9a9a" stroke-width="0.8"/>
<polygon points="930.3,180.8 950.1,191.5 950.6,215 933,202.7" fill="#ececec" stroke="#9a9a9a" stroke-width="0.8"/>
<polygon points="950.1,191.5 969.8,181.3 968.2,203.8 950.6,215" fill="#e6e6e6" stroke="#9a9a9a" stroke-width="0.8"/>
<text x="0" y="1.6" text-anchor="middle" font-family="Liberation Sans" font-size="4.6" fill="#8a8a8a" transform="translate(948.5,181.8) rotate(155)">TOP</text>
<text x="0" y="1.6" text-anchor="middle" font-family="Liberation Sans" font-size="4.6" fill="#8a8a8a" transform="translate(940,198.5) rotate(32)">BACK</text>
<text x="0" y="1.6" text-anchor="middle" font-family="Liberation Sans" font-size="4.6" fill="#8a8a8a" transform="translate(959.5,199) rotate(-32)">LEFT</text>
<!-- nav bar -->
<rect x="956.5" y="226.5" width="26.5" height="90.5" rx="3" fill="#f4f4f4" stroke="#a8a8a8" stroke-width="1"/>
<circle cx="977.5" cy="231.5" r="2.6" fill="#e4e4e4" stroke="#999" stroke-width="0.8"/>
<circle cx="977.5" cy="311.5" r="2.6" fill="#e4e4e4" stroke="#999" stroke-width="0.8"/>
<path d="M976,230 l3,3 M979,230 l-3,3" stroke="#999" stroke-width="0.6"/>
<path d="M970,243 a7.5,7.5 0 1 0 0,15 h4 v-7.5 a7.5,7.5 0 0 0 -4,-7.5z" fill="#f7f7f7" stroke="#999" stroke-width="0.9"/>
<circle cx="967.5" cy="250.5" r="3" fill="#fff" stroke="#888" stroke-width="0.9"/>
<path d="M972,252.5 l3.5,-1.5 l3.5,1.5 v4 l-3.5,1.5 l-3.5,-1.5z" fill="#8ec1ec" stroke="#4a90d6" stroke-width="0.7"/>
<polygon points="967.5,265 970.5,265 969,267" fill="#555"/>
<rect x="958.5" y="271" width="22" height="1" fill="#cfcfcf"/>
<path d="M963.5,277.5 l8,8 M971.5,277.5 l-8,8" stroke="#999" stroke-width="0.8" stroke-dasharray="1.5,1"/>
<circle cx="972.5" cy="286.5" r="2.3" fill="none" stroke="#555" stroke-width="0.9"/><path d="M974.2,288.2 l2.2,2.2" stroke="#555" stroke-width="1.2"/>
<polygon points="967.5,297 970.5,297 969,299" fill="#555"/>
<!-- view control bar icons -->
<rect x="347.5" y="531.5" width="12" height="9" rx="0.8" fill="#3c4448"/>
<g fill="#fff"><circle cx="350" cy="534" r="1.4"/><circle cx="353.5" cy="534" r="1.4"/><circle cx="357" cy="534" r="1.4"/><circle cx="350" cy="538" r="1.4"/><circle cx="353.5" cy="538" r="1.4"/><circle cx="357" cy="538" r="1.4"/></g>
<path d="M365.5,535.5 l2.5,-2 h9 v6 l-2.5,2 h-9z" fill="#a8d0f0" stroke="#2f7fd1" stroke-width="0.9"/>
<rect x="366" y="537" width="8" height="1.2" fill="#d23"/><rect x="366" y="539.2" width="8" height="1.2" fill="#3a3"/>
<g stroke="#c4c4c4" stroke-width="0.9" fill="none"><circle cx="386" cy="537" r="2.5"/><path d="M381,537 h1.5 M389.5,537 h1.5 M386,532 v1.5 M386,540.5 v1.5 M382.5,533.5 l1,1 M388.5,539.5 l1,1 M382.5,540.5 l1,-1 M388.5,534.5 l1,-1"/><circle cx="402" cy="537" r="2.5"/><path d="M398,537 h1.5 M404.5,537 h1.5 M402,533 v1.5 M402,539.5 v1.5 M405,540 l2.5,1.5"/></g>
<path d="M413,536 h1.5 M415.5,532.5 v8 h8 M415.5,534 h8.5 v6" stroke="#2f6fc0" stroke-width="1.4" fill="none"/>
<path d="M418.5,536 l6,5.5 M424.5,536 l-6,5.5" stroke="#e02a2a" stroke-width="1.6"/>
<path d="M430,536 h1.5 M432.5,532.5 v8 h7 M432.5,534 h5" stroke="#2f6fc0" stroke-width="1.4" fill="none"/>
<circle cx="438.5" cy="535.5" r="2.3" fill="#fff" stroke="#2f7fd1" stroke-width="1"/><path d="M438.5,537.8 v2.5" stroke="#2f7fd1"/>
<path d="M445.5,536.5 l6,-4.5 l6,4.5 v5 h-12z" fill="#eee" stroke="#444" stroke-width="1.1"/>
<rect x="451.5" y="537.5" width="5.5" height="4.5" fill="#3b7fd0" stroke="#224" stroke-width="0.6"/>
<path d="M462,535.5 l3.5,1.5" stroke="#333" stroke-width="1" fill="none"/><ellipse cx="468" cy="538.3" rx="2.6" ry="2" fill="#e8f2fb" stroke="#333" stroke-width="1"/><ellipse cx="472.8" cy="536.6" rx="2.2" ry="1.8" fill="#e8f2fb" stroke="#333" stroke-width="1"/>
<circle cx="484" cy="535.5" r="2.2" fill="none" stroke="#c8c8c8" stroke-width="0.9"/><path d="M483,538.5 h2 M483.2,540 h1.6" stroke="#c8c8c8" stroke-width="0.9"/>
<rect x="495.5" y="533.5" width="8" height="7" fill="none" stroke="#c8c8c8" stroke-width="0.9" stroke-dasharray="1.5,1"/><circle cx="503" cy="537.5" r="2" fill="none" stroke="#c8c8c8"/>
<path d="M511.5,535 l3,-2 h6 v6 l-3,2 h-6z M511.5,535 h6 v6 M517.5,535 l3,-2" stroke="#c8c8c8" stroke-width="0.9" fill="none"/>
<path d="M528.5,531.5 v4 M539.5,531.5 v4 M529,533.5 h10" stroke="#333" stroke-width="1" fill="none"/><path d="M529,536 h1 M528.5,537 v5.5" stroke="#666" stroke-width="0.8" stroke-dasharray="1,1" fill="none"/><rect x="533.5" y="538" width="5.5" height="4.5" rx="0.8" fill="#555"/><path d="M534.8,538 v-1.3 a1.5,1.5 0 0 1 3,0 v1.3" stroke="#555" stroke-width="1" fill="none"/>
<path d="M551,534 l-3,3 l3,3" stroke="#333" stroke-width="1.4" fill="none"/>
<!-- status separators & icons -->
<rect x="942.5" y="546" width="1" height="16" fill="#d8d8d8"/><rect x="962" y="546" width="1" height="16" fill="#d8d8d8"/><rect x="984.5" y="546" width="1" height="16" fill="#d8d8d8"/>
<rect x="946.5" y="551" width="6.5" height="4.5" rx="2.2" fill="none" stroke="#e3a415" stroke-width="1.8"/><rect x="952" y="551" width="6.5" height="4.5" rx="2.2" fill="none" stroke="#e3a415" stroke-width="1.8"/>
<path d="M952.5,553 v7.5 l2,-2 l1.5,3 l1,-0.5 l-1.5,-3 h2.5z" fill="#fff" stroke="#444" stroke-width="0.7"/>
<path d="M966,556 l5,-6 h8 l-5,6z M966,559 h10" fill="none" stroke="#2f7fd1" stroke-width="1.2"/>
<path d="M974.5,553 v7.5 l2,-2 l1.5,3 l1,-0.5 l-1.5,-3 h2.5z" fill="#fff" stroke="#444" stroke-width="0.7"/>

</svg>
</body></html>
